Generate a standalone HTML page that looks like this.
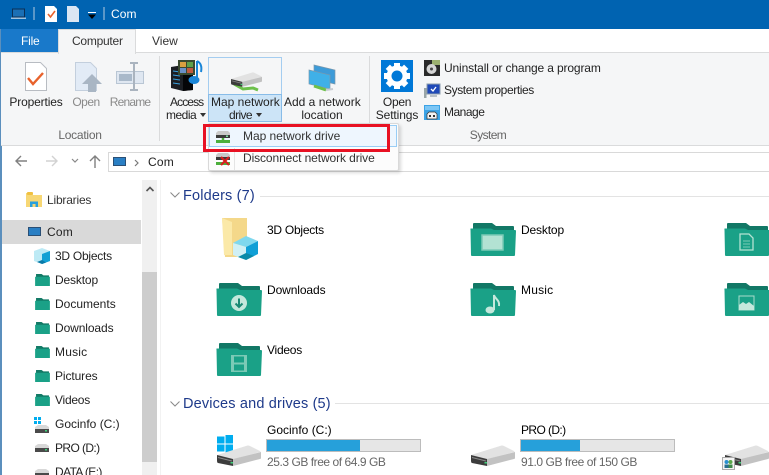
<!DOCTYPE html>
<html><head><meta charset="utf-8">
<style>
html,body{margin:0;padding:0;background:#fff}
#r{position:relative;width:769px;height:475px;overflow:hidden;background:#fff;font-family:"Liberation Sans",sans-serif;font-size:12px;color:#222}
.t{position:absolute;white-space:nowrap;line-height:14px;letter-spacing:-.12px}
.c{transform:translateX(-50%)}
.b{position:absolute}
.g{color:#666}
.h{color:#1e3a8a;font-size:14.5px;line-height:18px;letter-spacing:.16px}
.k{color:#000}
svg{position:absolute;overflow:visible}
</style></head><body><div id="r">
<svg width="0" height="0" style="position:absolute">
<defs>
<symbol id="f" viewBox="0 0 46 33" preserveAspectRatio="none"><path d="M3 1Q3 0 4 0H22L26 3H43Q44 3 44 4V8H3z" fill="#127866"/><path d="M.5 6.500Q0 5.500 1 5.500H21L24 7H45Q46 7 46 8L45 32Q45 33 44 33H2Q1 33 1 32z" fill="#1aa187"/></symbol>
<symbol id="sf" viewBox="0 0 16 13"><path d="M1 0h6l2 1.500h6V5H1z" fill="#137a66"/><path d="M0 3h16v10H0z" fill="#1aa187"/></symbol>
<symbol id="hd" viewBox="0 0 44 22"><path d="M0 10L29 1Q31 0 33 1L43 6Q44 7 43 7L17 14Q16 14.500 15 14z" fill="#e2e2e2"/><path d="M16 14L44 7V13Q44 14 43 14L16 21z" fill="#c2c2c2"/><path d="M0 10L16 14V21L1 18Q0 17.500 0 16z" fill="#3c3c3c"/><path d="M1 12.500L15 16" stroke="#8a8a8a" stroke-width="1"/><rect x="13.500" y="17" width="2.500" height="1.500" fill="#3fd07a"/></symbol>
</defs>
</svg>

<!-- title bar -->
<div class="b" style="left:0;top:0;width:769px;height:29px;background:#0063b1"></div>
<div class="b" style="left:0;top:29px;width:1.500px;height:446px;background:#5b8fbd"></div>
<svg style="left:11px;top:8px" width="16" height="12"><rect x="1.500" y="1" width="12" height="8" fill="#1b6fb5" stroke="#0b2f55"/><rect x="0" y="9.500" width="15" height="1.500" fill="#9fc2df"/></svg>
<div class="b" style="left:33px;top:7px;width:2px;height:13px;background:#5b97c8"></div>
<svg style="left:45px;top:6px" width="13" height="16"><path d="M0 0h9l3 3v13H0z" fill="#fff"/><path d="M3 8l2.500 3L10 5" fill="none" stroke="#e8622c" stroke-width="1.600"/></svg>
<svg style="left:67px;top:6px" width="13" height="16"><path d="M0 0h9l3 3v13H0z" fill="#dbe6f3"/></svg>
<svg style="left:87px;top:12px" width="10" height="7"><rect x="1" y="0" width="8" height="1" fill="#fff"/><path d="M1 2.500h8L5 7z" fill="#000"/></svg>
<div class="b" style="left:103px;top:7px;width:2px;height:13px;background:#5b97c8"></div>
<div class="t" style="left:111px;top:7px;color:#fff;letter-spacing:.1px">Com</div>

<!-- tabs -->
<div class="b" style="left:1px;top:29px;width:57px;height:23px;background:#1979ca"></div>
<div class="t" style="left:21px;top:34px;color:#fff;letter-spacing:-.2px">File</div>
<div class="b" style="left:58px;top:29px;width:78px;height:25px;background:#f5f6f7;border:1px solid #dadbdc;border-bottom:0;box-sizing:border-box;z-index:2"></div>
<div class="t" style="left:72px;top:34px;z-index:3;color:#333;letter-spacing:-.25px">Computer</div>
<div class="t" style="left:152px;top:34px;color:#333;letter-spacing:0">View</div>

<!-- ribbon -->
<div class="b" style="left:1px;top:52px;width:768px;height:92px;background:#f5f6f7;border-top:1px solid #dadbdc;border-bottom:1px solid #dadbdc;box-sizing:content-box"></div>
<div class="b" style="left:159px;top:56px;width:1px;height:85px;background:#dadbdc"></div>
<div class="b" style="left:369px;top:56px;width:1px;height:85px;background:#dadbdc"></div>

<svg style="left:25px;top:62px" width="22" height="29"><path d="M.5 .5h15l6 6v22H.5z" fill="#fff" stroke="#b8bcc2"/><path d="M3 16l5 6L18 11" fill="none" stroke="#e8622c" stroke-width="2.400"/></svg>
<div class="t c" style="left:36px;top:95px;letter-spacing:-.15px">Properties</div>
<svg style="left:75px;top:62px" width="28" height="30"><path d="M.5 .5h15l6 6v22H.5z" fill="#e2ebf6" stroke="#c3cfdd"/><path d="M17 12l10 10h-6v8h-8v-8H7z" fill="#a9b6c4"/></svg>
<div class="t c" style="left:86px;top:95px;color:#8a8a8a;letter-spacing:-.5px">Open</div>
<svg style="left:116px;top:62px" width="29" height="29"><rect x=".5" y="9.500" width="27" height="12" fill="#dfe7f1" stroke="#b9c6d4"/><rect x="3" y="12" width="13" height="7" fill="#a9b9ca"/><path d="M18 1v27M14 1h8M14 28h8" stroke="#aab4bf" stroke-width="2" fill="none"/></svg>
<div class="t c" style="left:130px;top:95px;color:#8a8a8a;letter-spacing:-.8px">Rename</div>

<svg style="left:170px;top:59px" width="34" height="32"><path d="M1 8l12-2 10 3v22l-10 1-12-3z" fill="#1c1f24"/><path d="M13 6l10 3v22l-10 1z" fill="#050608"/><path d="M3 12l7 1M3 16l7 1M3 20l7 1M3 24l7 1" stroke="#39a0e0" stroke-width="1"/><rect x="8" y="1" width="17" height="15" fill="#3a4a30"/><rect x="10" y="3" width="6" height="5" fill="#d9a040"/><rect x="17" y="3" width="6" height="5" fill="#5ea04a"/><rect x="10" y="9" width="6" height="5" fill="#6a90c8"/><rect x="17" y="9" width="6" height="5" fill="#c05a40"/><path d="M27 2c4 2 5 6 4 11M27 2v17" stroke="#1a86d8" stroke-width="2" fill="none"/><ellipse cx="24" cy="21" rx="5.500" ry="4" fill="#1a86d8"/></svg>
<div class="t" style="left:170px;top:95px;letter-spacing:-.9px">Access</div>
<div class="t" style="left:166px;top:108px;letter-spacing:-.5px">media</div>
<svg style="left:200px;top:113px" width="6" height="4"><path d="M0 0h6L3 4z" fill="#333"/></svg>

<!-- Map network drive button -->
<div class="b" style="left:208px;top:57px;width:74px;height:65px;border:1px solid #a4cdf0;box-sizing:border-box;background:#f5f6f7"></div>
<div class="b" style="left:208px;top:94px;width:74px;height:28px;border:1px solid #88bce8;box-sizing:border-box;background:#cce4f7"></div>
<svg style="left:231px;top:72px" width="32" height="19"><path d="M3 12l9 5 10-1 5 2" fill="none" stroke="#6cc04a" stroke-width="3"/><use href="#hd" width="31" height="15.500"/></svg>
<div class="t" style="left:211px;top:95px;letter-spacing:0">Map network</div>
<div class="t" style="left:229px;top:108px;letter-spacing:-.6px">drive</div>
<svg style="left:256px;top:113px" width="6" height="4"><path d="M0 0h6L3 4z" fill="#333"/></svg>

<svg style="left:308px;top:65px" width="29" height="27"><path d="M6 0l21 5v14l-21-5z" fill="#3d9bd8" stroke="#7a98ad" stroke-width=".7"/><path d="M1 5l21 5v14L1 19z" fill="#3fb0e8" stroke="#7a98ad" stroke-width=".7"/><path d="M6 21l12 4" stroke="#6cc04a" stroke-width="3"/><path d="M18 25l7-1" stroke="#c9cdd2" stroke-width="2"/></svg>
<div class="t" style="left:284px;top:95px;letter-spacing:0">Add a network</div>
<div class="t c" style="left:322px;top:108px;letter-spacing:0">location</div>

<!-- System -->
<div class="b" style="left:381px;top:60px;width:32px;height:32px;background:#0078d7"></div>
<svg style="left:381px;top:60px" width="32" height="32" viewBox="0 0 32 32"><g fill="#fff"><circle cx="16" cy="16" r="10.500"/><rect x="13" y="3" width="6" height="26"/><rect x="13" y="3" width="6" height="26" transform="rotate(45 16 16)"/><rect x="13" y="3" width="6" height="26" transform="rotate(90 16 16)"/><rect x="13" y="3" width="6" height="26" transform="rotate(135 16 16)"/></g><circle cx="16" cy="16" r="5.500" fill="#0078d7"/></svg>
<div class="t c" style="left:397px;top:95px;letter-spacing:-.3px">Open</div>
<div class="t c" style="left:397px;top:108px;letter-spacing:-.1px">Settings</div>

<svg style="left:424px;top:60px" width="16" height="16"><rect width="16" height="16" fill="#2a2a2a"/><rect x="8" y="0" width="8" height="5" fill="#9cb070"/><circle cx="7.500" cy="9" r="5" fill="#d5d5d5"/><circle cx="7.500" cy="9" r="1.500" fill="#444"/></svg>
<div class="t" style="left:444px;top:61px;letter-spacing:-.14px">Uninstall or change a program</div>
<svg style="left:424px;top:84px" width="16" height="14"><rect x="3" y="0" width="13" height="10" fill="#1f49b8" stroke="#8a9cad"/><path d="M7 5l2 2 3-4" stroke="#fff" stroke-width="1.300" fill="none"/><rect x="0" y="4" width="2.500" height="10" fill="#9aa6a8"/><rect x="6" y="11" width="7" height="2" fill="#b8c0c8"/></svg>
<div class="t" style="left:444px;top:83px;letter-spacing:-.4px">System properties</div>
<svg style="left:424px;top:105px" width="16" height="15"><rect width="16" height="15" fill="#3ba3e6"/><rect x="1" y="1" width="14" height="4" fill="#7cc6f5"/><path d="M3 14V9l2-2h6l2 2v5z" fill="#f2f2f2" stroke="#333" stroke-width=".7"/><rect x="5" y="10" width="2" height="2" fill="#333"/><rect x="9" y="10" width="2" height="2" fill="#333"/></svg>
<div class="t" style="left:444px;top:105px;letter-spacing:-.5px">Manage</div>

<div class="t c g" style="left:80px;top:128px;letter-spacing:-.25px">Location</div>
<div class="t c g" style="left:488px;top:128px;letter-spacing:-.6px">System</div>

<!-- address -->
<svg style="left:14px;top:153px" width="90" height="16">
<path d="M2 8h11M7 3L2 8l5 5" fill="none" stroke="#808080" stroke-width="1.400"/>
<path d="M32 8h11M38 3l5 5-5 5" fill="none" stroke="#d2d2d2" stroke-width="1.400"/>
<path d="M58 6l3 3 3-3" fill="none" stroke="#888" stroke-width="1.200"/>
<path d="M81 15V3M76 8l5-5 5 5" fill="none" stroke="#808080" stroke-width="1.400"/>
</svg>
<div class="b" style="left:108px;top:152px;width:670px;height:20px;border:1px solid #d9d9d9;box-sizing:border-box;background:#fff"></div>
<svg style="left:113px;top:157px" width="14" height="10"><rect x=".5" y=".5" width="12" height="8" fill="#2a7fc4" stroke="#2a4f75"/></svg>
<svg style="left:134px;top:159px" width="6" height="8"><path d="M1 1l3 3-3 3" fill="none" stroke="#777" stroke-width="1.200"/></svg>
<div class="t" style="left:148px;top:155px;letter-spacing:.2px">Com</div>

<!-- nav -->
<svg style="left:26px;top:192px" width="16" height="15"><path d="M0 1h5l2 2h9v12H0z" fill="#f7d774"/><rect x="1" y="0" width="6" height="3" fill="#f0c040" rx="1"/><path d="M4 15V9.500h8V15h-2.500v-3h-3v3z" fill="#2aa0dc"/></svg>
<div class="t" style="left:47px;top:193px;color:#333;letter-spacing:-.2px">Libraries</div>
<div class="b" style="left:2px;top:220px;width:139px;height:24px;background:#d9d9d9"></div>
<svg style="left:28px;top:227px" width="14" height="10"><rect x=".5" y=".5" width="12" height="8" fill="#2a7fc4" stroke="#2a4f75"/></svg>
<div class="t" style="left:47px;top:225px;color:#222;letter-spacing:.2px">Com</div>
<svg style="left:34px;top:248px" width="16" height="16"><path d="M8 0l8 3v10l-8 3-8-3V3z" fill="#bdeaf5"/><path d="M8 6l8-3v10l-8 3z" fill="#12a0d4"/><path d="M8 12l-5 2 5 2 4-1.500z" fill="#0a7aa8"/></svg>
<div class="t" style="left:55px;top:249px;letter-spacing:-.25px">3D Objects</div>
<svg style="left:35px;top:274px" width="15" height="12"><use href="#sf" width="15" height="12"/></svg>
<div class="t" style="left:55px;top:273px;letter-spacing:-.15px">Desktop</div>
<svg style="left:35px;top:298px" width="15" height="12"><use href="#sf" width="15" height="12"/></svg>
<div class="t" style="left:55px;top:297px;letter-spacing:0">Documents</div>
<svg style="left:35px;top:322px" width="15" height="12"><use href="#sf" width="15" height="12"/></svg>
<div class="t" style="left:55px;top:321px;letter-spacing:-.1px">Downloads</div>
<svg style="left:35px;top:346px" width="15" height="12"><use href="#sf" width="15" height="12"/></svg>
<div class="t" style="left:55px;top:345px;letter-spacing:.2px">Music</div>
<svg style="left:35px;top:370px" width="15" height="12"><use href="#sf" width="15" height="12"/></svg>
<div class="t" style="left:55px;top:369px;letter-spacing:-.1px">Pictures</div>
<svg style="left:35px;top:394px" width="15" height="12"><use href="#sf" width="15" height="12"/></svg>
<div class="t" style="left:55px;top:393px;letter-spacing:-.25px">Videos</div>
<svg style="left:34px;top:417px" width="15" height="16"><rect x="0" y="0" width="3" height="3" fill="#00adef"/><rect x="4" y="0" width="3" height="3" fill="#00adef"/><rect x="0" y="4" width="3" height="3" fill="#00adef"/><rect x="4" y="4" width="3" height="3" fill="#00adef"/><path d="M1 10l3-2h8l3 2v2H1z" fill="#d8d8d8"/><rect x="1" y="12" width="14" height="4" fill="#4a4a4a"/><rect x="11" y="13" width="2" height="1.500" fill="#3fd07a"/></svg>
<div class="t" style="left:55px;top:417px;letter-spacing:0">Gocinfo (C:)</div>
<svg style="left:34px;top:443px" width="15" height="10"><path d="M1 3l3-2h8l3 2v2H1z" fill="#d8d8d8"/><rect x="1" y="5" width="14" height="4" fill="#4a4a4a"/><rect x="11" y="6" width="2" height="1.500" fill="#3fd07a"/></svg>
<div class="t" style="left:55px;top:441px;letter-spacing:-.6px">PRO (D:)</div>
<svg style="left:34px;top:468px" width="15" height="10"><path d="M1 3l3-2h8l3 2v2H1z" fill="#d8d8d8"/><rect x="1" y="5" width="14" height="4" fill="#4a4a4a"/></svg>
<div class="t" style="left:55px;top:465px;letter-spacing:-.6px">DATA (E:)</div>

<!-- scrollbar -->
<div class="b" style="left:142px;top:180px;width:15px;height:295px;background:#f0f0f0"></div>
<div class="b" style="left:142px;top:272px;width:15px;height:190px;background:#cdcdcd"></div>
<svg style="left:146px;top:186px" width="8" height="6"><path d="M.5 5L4 1.500 7.500 5" fill="none" stroke="#555" stroke-width="1.600"/></svg>
<div class="b" style="left:160px;top:180px;width:1px;height:295px;background:#f2f2f2"></div>

<!-- Folders -->
<svg style="left:170px;top:192px" width="10" height="6"><path d="M.5 .5L5 5 9.500 .5" fill="none" stroke="#888"/></svg>
<div class="t h" style="left:183px;top:187px">Folders (7)</div>
<div class="b" style="left:260px;top:196px;width:509px;height:1px;background:#e3e3e3"></div>
<svg style="left:221px;top:217px" width="38" height="44"><path d="M1 1h25v39H4z" fill="#f4d88a"/><path d="M1 1l10 4v33l-8 0z" fill="#fbe9a8"/><path d="M12 26L25 19 37 24 25 30z" fill="#7fd8ee"/><path d="M12 26L25 30V43L12 38z" fill="#d0f0f5"/><path d="M25 30L37 24V37L25 43z" fill="#0f9fd6"/><path d="M17 40L25 36 33 39 25 43z" fill="#0a8aa8"/></svg>
<div class="t k" style="left:267px;top:223px;letter-spacing:-.25px">3D Objects</div>

<svg style="left:216px;top:283px" width="46" height="33"><use href="#f" width="46" height="33"/><circle cx="23" cy="20" r="8" fill="#c4e8dc"/><path d="M23 15.500v8M19.500 20.500l3.500 3.500 3.500-3.500" fill="none" stroke="#1a8a74" stroke-width="2"/></svg>
<div class="t k" style="left:267px;top:283px;letter-spacing:-.1px">Downloads</div>

<svg style="left:216px;top:343px" width="46" height="33"><use href="#f" width="46" height="33"/><rect x="15" y="12" width="16" height="17" fill="#7bcab6"/><rect x="18" y="13.500" width="10" height="6" fill="#1aa187"/><rect x="18" y="21.500" width="10" height="6" fill="#1aa187"/></svg>
<div class="t k" style="left:267px;top:343px;letter-spacing:-.25px">Videos</div>

<svg style="left:470px;top:223px" width="46" height="33"><use href="#f" width="46" height="33"/><rect x="12" y="12" width="21" height="15" fill="#b3e2d3" stroke="#7bcab6" stroke-width="1.500"/></svg>
<div class="t k" style="left:521px;top:223px;letter-spacing:-.15px">Desktop</div>

<svg style="left:470px;top:283px" width="46" height="33"><use href="#f" width="46" height="33"/><ellipse cx="20" cy="27" rx="4.500" ry="3.500" fill="#c4e8dc"/><path d="M24 27V12c1 4 6 5 5 11" fill="none" stroke="#c4e8dc" stroke-width="2"/></svg>
<div class="t k" style="left:521px;top:283px;letter-spacing:.2px">Music</div>

<svg style="left:724px;top:223px" width="46" height="33"><use href="#f" width="46" height="33"/><path d="M16 11h9l4 4v12H16z" fill="#1aa187" stroke="#b3e2d3" stroke-width="1.300"/><path d="M19 18h7M19 21h7M19 24h7" stroke="#7bcab6"/></svg>
<svg style="left:724px;top:283px" width="46" height="33"><use href="#f" width="46" height="33"/><rect x="15" y="13" width="15" height="14" fill="#1aa187" stroke="#a8dccb" stroke-width="1"/><path d="M15 27v-5l4-3 3 2 3-2 5 4v4z" fill="#c4e8dc"/></svg>

<!-- Devices -->
<svg style="left:170px;top:401px" width="10" height="6"><path d="M.5 .5L5 5 9.500 .5" fill="none" stroke="#888"/></svg>
<div class="t h" style="left:183px;top:395px">Devices and drives (5)</div>
<div class="b" style="left:335px;top:403px;width:434px;height:1px;background:#e3e3e3"></div>

<svg style="left:217px;top:435px" width="17" height="17"><g fill="#00adef"><rect x="0" y="1.500" width="7.500" height="7"/><rect x="8.500" y="0" width="7.500" height="8.500"/><rect x="0" y="9.500" width="7.500" height="7"/><rect x="8.500" y="9.500" width="7.500" height="8"/></g></svg>
<svg style="left:217px;top:445px" width="44" height="22"><use href="#hd" width="44" height="22"/></svg>
<div class="t k" style="left:267px;top:423px;letter-spacing:0">Gocinfo (C:)</div>
<div class="b" style="left:266px;top:439px;width:155px;height:13px;background:#e6e6e6;border:1px solid #bcbcbc;box-sizing:border-box"></div>
<div class="b" style="left:267px;top:440px;width:93px;height:11px;background:#26a0da"></div>
<div class="t g" style="left:267px;top:455px;letter-spacing:-.45px">25.3 GB free of 64.9 GB</div>

<svg style="left:471px;top:445px" width="44" height="22"><use href="#hd" width="44" height="22"/></svg>
<div class="t k" style="left:521px;top:423px;letter-spacing:-.6px">PRO (D:)</div>
<div class="b" style="left:520px;top:439px;width:155px;height:13px;background:#e6e6e6;border:1px solid #bcbcbc;box-sizing:border-box"></div>
<div class="b" style="left:521px;top:440px;width:59px;height:11px;background:#26a0da"></div>
<div class="t g" style="left:521px;top:455px;letter-spacing:-.43px">91.0 GB free of 150 GB</div>

<svg style="left:725px;top:445px" width="44" height="22"><use href="#hd" width="44" height="22"/></svg>
<svg style="left:722px;top:457px" width="13" height="13"><rect x=".5" y=".5" width="12" height="12" fill="#f4f4f4" stroke="#aaa"/><circle cx="4.500" cy="5" r="2" fill="#2a8fd0"/><circle cx="8.500" cy="5" r="2" fill="#5aa84a"/><rect x="2.500" y="7.500" width="4" height="3.500" fill="#2a6f90"/><rect x="6.500" y="7.500" width="4" height="3.500" fill="#3f8a4a"/></svg>

<!-- dropdown -->
<div class="b" style="left:208px;top:123px;width:191px;height:48px;background:#fcfcfc;border:1px solid #d9d9d9;box-shadow:2px 2px 3px rgba(0,0,0,.15);box-sizing:border-box;border-radius:2px;z-index:5"></div>
<div class="b" style="left:209px;top:125px;width:188px;height:22px;background:#eef6fe;border:1px solid #99cdf5;box-sizing:border-box;z-index:5"></div>
<div class="b" style="left:234px;top:148px;width:1px;height:22px;background:#e4e4e4;z-index:5"></div>
<svg style="left:215px;top:130px;z-index:6" width="15" height="13"><path d="M1 3l2-2h10l2 2v2H1z" fill="#c9c9c9"/><rect x="1" y="5" width="14" height="3" fill="#3a3a3a"/><rect x="11" y="5.500" width="2" height="1.500" fill="#7fe0a0"/><path d="M8 8v2" stroke="#4caf3c" stroke-width="2.500"/><rect x="1" y="10" width="14" height="3" fill="#4caf3c"/></svg>
<svg style="left:215px;top:152px;z-index:6" width="16" height="14"><path d="M1 3l2-2h10l2 2v2H1z" fill="#c9c9c9"/><rect x="1" y="5" width="14" height="3" fill="#3a3a3a"/><rect x="1" y="10" width="14" height="3" fill="#4caf3c"/><path d="M6 5l8 8M14 5l-8 8" stroke="#d81e1e" stroke-width="2.200"/></svg>
<div class="t" style="left:243px;top:129px;z-index:6;color:#333;letter-spacing:-.05px">Map network drive</div>
<div class="t" style="left:243px;top:151px;z-index:6;color:#333;letter-spacing:-.1px">Disconnect network drive</div>
<div class="b" style="left:203px;top:124px;width:187px;height:28px;border:3px solid #e81123;box-sizing:border-box;z-index:7"></div>
</div></body></html>
